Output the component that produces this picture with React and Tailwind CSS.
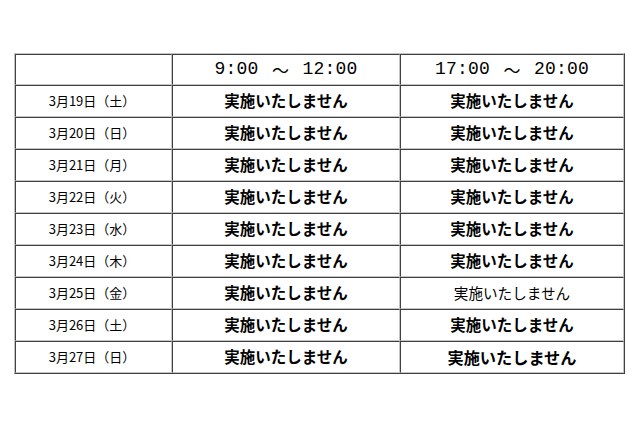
import React from "react";

const rows = [
  { d: "3月19日（土）" },
  { d: "3月20日（日）" },
  { d: "3月21日（月）" },
  { d: "3月22日（火）" },
  { d: "3月23日（水）" },
  { d: "3月24日（木）" },
  { d: "3月25日（金）", thin: true },
  { d: "3月26日（土）" },
  { d: "3月27日（日）", big: true },
];

const cell =
  "flex items-center justify-center border border-t-[#404040] border-l-[#404040] border-b-[#c4c4c4] border-r-[#c4c4c4] text-black";

function Time({ a, b }) {
  return (
    <span
      className="flex items-center text-[18px] tracking-[0.2px]"
      style={{ fontFamily: '"Liberation Mono", "Noto Sans CJK JP", monospace' }}
    >
      <span>{a}</span>
      <span className="inline-block w-[11px]"></span>
      <span
        className="inline-block w-[22px] text-center tracking-normal text-[17px]"
        style={{ fontFamily: '"Noto Sans CJK JP", sans-serif' }}
      >
        ～
      </span>
      <span className="inline-block w-[11px]"></span>
      <span>{b}</span>
    </span>
  );
}

export default function App() {
  const jp = { fontFamily: '"Noto Sans CJK JP", "Noto Sans", sans-serif' };
  return (
    <div className="w-[640px] h-[426px] bg-white pt-[53px] pl-[14px]" style={jp}>
      <div className="inline-grid grid-cols-[157px_228px_224px] border border-t-[#c4c4c4] border-l-[#c4c4c4] border-b-[#404040] border-r-[#404040]">
        <div className={`${cell} h-[31px]`}></div>
        <div className={`${cell} h-[31px]`}>
          <Time a="9:00" b="12:00" />
        </div>
        <div className={`${cell} h-[31px]`}>
          <Time a="17:00" b="20:00" />
        </div>
        {rows.map((r) => (
          <React.Fragment key={r.d}>
            <div className={`${cell} h-[32px] text-[13px] text-[#222]`}>
              <span className="pr-[3px]">{r.d}</span>
            </div>
            <div className={`${cell} h-[32px] text-[15.5px] font-bold`}>
              実施いたしません
            </div>
            <div
              className={`${cell} h-[32px] ${
                r.thin
                  ? "text-[14.6px] font-normal text-[#222]"
                  : r.big
                  ? "text-[16.2px] font-bold"
                  : "text-[15.5px] font-bold"
              }`}
            >
              実施いたしません
            </div>
          </React.Fragment>
        ))}
      </div>
    </div>
  );
}
